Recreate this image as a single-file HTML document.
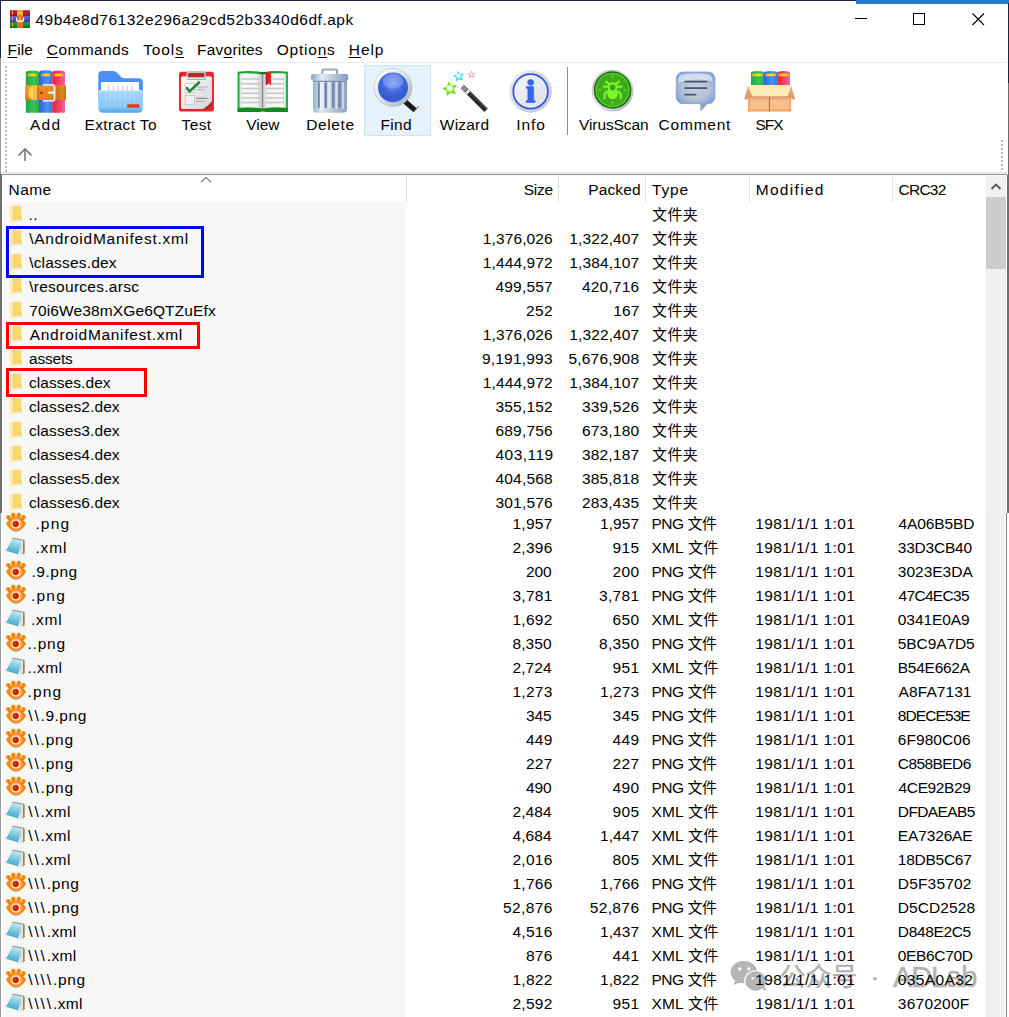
<!DOCTYPE html>
<html lang="zh">
<head>
<meta charset="utf-8">
<title>49b4e8d76132e296a29cd52b3340d6df.apk</title>
<style>
html,body{margin:0;padding:0;background:#fff;}
body{width:1009px;height:1017px;position:relative;overflow:hidden;font-family:"Liberation Sans","Noto Sans CJK SC",sans-serif;font-size:15px;color:#000;}
.a{position:absolute;}
.t{position:absolute;white-space:pre;line-height:20px;height:20px;font-size:15.5px;}
.ic{position:absolute;overflow:visible;}
.c{font-size:15px;position:relative;top:0.5px}
u{text-decoration:underline;text-decoration-thickness:1.4px;text-underline-offset:1.6px;}
</style>
</head>
<body>
<!-- name column sorted background -->
<div class=a style="left:3px;top:202px;width:403px;height:815px;background:#f7f7f7"></div>
<!-- window borders -->
<div class=a style="left:0;top:0;width:1009px;height:1px;background:#1b2440"></div>
<div class=a style="left:856px;top:0;width:153px;height:3.5px;background:#1e7ccf"></div>
<div class=a style="left:0;top:174px;width:2px;height:339px;background:#6e6e6e"></div>
<div class=a style="left:0;top:0;width:1px;height:58px;background:#1b2440"></div>
<div class=a style="left:0;top:58px;width:1px;height:116px;background:#999"></div>
<div class=a style="left:0;top:513px;width:1px;height:504px;background:#9c9ea6"></div>
<div class=a style="left:1007.5px;top:3px;width:1.5px;height:80px;background:#1b2440"></div>
<div class=a style="left:1007.5px;top:83px;width:1.5px;height:92px;background:#6a6a6a"></div>
<div class=a style="left:1007px;top:175px;width:2px;height:338px;background:#707070"></div>
<div class=a style="left:1006px;top:513px;width:1px;height:504px;background:#85858d"></div>
<!-- title bar controls -->
<div class=a style="left:855px;top:18px;width:12px;height:1px;background:#000"></div>
<div class=a style="left:913px;top:13px;width:10px;height:10px;border:1px solid #000;box-sizing:content-box"></div>
<svg class=ic style="left:971px;top:12px" width=14 height=14><path d="M1.5 1.5L13 13M13 1.5L1.5 13" stroke="#000" stroke-width="1.1" fill="none"/></svg>
<!-- menu bar -->
<div class=a style="left:1px;top:61.7px;width:1006px;height:1.3px;background:#ebebeb"></div>
<!-- toolbar -->
<div class=a style="left:5px;top:66px;width:2px;height:106px;background:repeating-linear-gradient(#bababa 0 2px,#fff 2px 4px)"></div>
<div class=a style="left:1001px;top:140px;width:2px;height:32px;background:repeating-linear-gradient(#bababa 0 2px,#fff 2px 4px)"></div>
<div class=a style="left:364px;top:65px;width:65px;height:69px;background:#e5f1fb;border:1px solid #cce4f7;box-sizing:content-box"></div>
<div class=a style="left:567px;top:67px;width:1px;height:68px;background:#8c8c8c"></div>
<svg class=ic style="left:0;top:0" width="1009" height="140" viewBox="0 0 1009 140">
<defs>
<linearGradient id="gGreen" x1="0" x2="1"><stop offset="0" stop-color="#1fa840"/><stop offset=".6" stop-color="#33c455"/><stop offset="1" stop-color="#25b048"/></linearGradient>
<linearGradient id="gBlue" x1="0" x2="1"><stop offset="0" stop-color="#2b5fe0"/><stop offset=".6" stop-color="#4a92f0"/><stop offset="1" stop-color="#3578e6"/></linearGradient>
<linearGradient id="gRed" x1="0" x2="1"><stop offset="0" stop-color="#e8203c"/><stop offset=".6" stop-color="#f5456e"/><stop offset="1" stop-color="#f560a8"/></linearGradient>
<linearGradient id="gBelt" x1="0" x2="0" y1="0" y2="1"><stop offset="0" stop-color="#f5a428"/><stop offset=".5" stop-color="#ee8a1c"/><stop offset="1" stop-color="#e07814"/></linearGradient>
<linearGradient id="gYel" x1="0" x2="1"><stop offset="0" stop-color="#f6a812"/><stop offset=".6" stop-color="#ffe020"/><stop offset="1" stop-color="#f6b012"/></linearGradient>
<linearGradient id="gFoldF" x1="0" x2="0" y1="0" y2="1"><stop offset="0" stop-color="#a9d8fb"/><stop offset=".75" stop-color="#86c6f8"/><stop offset="1" stop-color="#4f9ff0"/></linearGradient>
<linearGradient id="gPaper" x1="0" x2="1" y1="0" y2="1"><stop offset="0" stop-color="#fbfbfb"/><stop offset="1" stop-color="#d4d4d4"/></linearGradient>
<linearGradient id="gLid" x1="0" x2="1"><stop offset="0" stop-color="#8fa3c0"/><stop offset=".3" stop-color="#e4ecf5"/><stop offset=".6" stop-color="#b8c8dc"/><stop offset="1" stop-color="#8397b6"/></linearGradient>
<linearGradient id="gCan" x1="0" x2="1"><stop offset="0" stop-color="#9db1cd"/><stop offset=".25" stop-color="#dfe8f3"/><stop offset=".6" stop-color="#b4c4da"/><stop offset="1" stop-color="#8ea3c2"/></linearGradient>
<radialGradient id="gLens" cx=".5" cy=".35" r=".7"><stop offset="0" stop-color="#8aa6f6"/><stop offset=".45" stop-color="#4668dc"/><stop offset=".8" stop-color="#3358d4"/><stop offset="1" stop-color="#3f86ee"/></radialGradient>
<linearGradient id="gRim" x1="0" x2="1" y1="0" y2="1"><stop offset="0" stop-color="#ffffff"/><stop offset=".5" stop-color="#dde2e6"/><stop offset="1" stop-color="#a8b0b8"/></linearGradient>
<linearGradient id="gInfo" x1="0" x2="1" y1="0" y2="1"><stop offset="0" stop-color="#eef0f3"/><stop offset=".5" stop-color="#d6dadf"/><stop offset="1" stop-color="#c2c8cf"/></linearGradient>
<linearGradient id="gInfoIn" x1="0" x2="1" y1="0" y2="1"><stop offset="0" stop-color="#f6f7f9"/><stop offset="1" stop-color="#d9dde3"/></linearGradient>
<linearGradient id="gI" x1="0" x2="0" y1="0" y2="1"><stop offset="0" stop-color="#4a78ee"/><stop offset="1" stop-color="#2f48e4"/></linearGradient>
<linearGradient id="gVRim" x1="0" x2="1" y1="0" y2="1"><stop offset="0" stop-color="#b4b6ba"/><stop offset=".5" stop-color="#e6e7e9"/><stop offset="1" stop-color="#a4a6aa"/></linearGradient>
<radialGradient id="gVir" cx=".5" cy=".5" r=".5"><stop offset="0" stop-color="#46b41f"/><stop offset=".85" stop-color="#3ea81c"/><stop offset="1" stop-color="#57d422"/></radialGradient>
<linearGradient id="gCom" x1="0" x2="0" y1="0" y2="1"><stop offset="0" stop-color="#c6d6ee"/><stop offset=".45" stop-color="#b4c0d6"/><stop offset="1" stop-color="#a9b6cc"/></linearGradient>
<linearGradient id="gBox" x1="0" x2="0" y1="0" y2="1"><stop offset="0" stop-color="#df935c"/><stop offset=".3" stop-color="#f8c090"/><stop offset=".8" stop-color="#f9bd8a"/><stop offset="1" stop-color="#f39a52"/></linearGradient>
<linearGradient id="gFlap" x1="0" x2="0" y1="0" y2="1"><stop offset="0" stop-color="#f0b888"/><stop offset="1" stop-color="#cf8e5e"/></linearGradient>
<linearGradient id="gWand" x1="0" x2="1" y1="1" y2="0"><stop offset="0" stop-color="#1c1c1c"/><stop offset=".5" stop-color="#5a5a5a"/><stop offset="1" stop-color="#2a2a2a"/></linearGradient>
</defs>
<!-- window icon -->
<g>
<linearGradient id="wiR" x1="0" x2="0" y1="0" y2="1"><stop offset="0" stop-color="#e546a0"/><stop offset=".25" stop-color="#c4183f"/><stop offset="1" stop-color="#96102e"/></linearGradient>
<linearGradient id="wiB" x1="0" x2="0" y1="0" y2="1"><stop offset="0" stop-color="#6462dc"/><stop offset="1" stop-color="#3c3aae"/></linearGradient>
<linearGradient id="wiG" x1="0" x2="0" y1="0" y2="1"><stop offset="0" stop-color="#22a23e"/><stop offset=".8" stop-color="#157a2a"/><stop offset="1" stop-color="#0b5218"/></linearGradient>
<rect x="10" y="10" width="20" height="6" fill="url(#wiR)"/>
<rect x="10" y="16" width="20" height="6" fill="url(#wiB)"/>
<rect x="10" y="22" width="20" height="6" fill="url(#wiG)"/>
<rect x="11.900" y="11" width="1.200" height="3.600" fill="#f0a818"/><rect x="11.900" y="17" width="1.200" height="3.600" fill="#f0a818"/><rect x="11.900" y="23" width="1.200" height="3.600" fill="#f0a818"/>
<rect x="17" y="10" width="6" height="7" fill="#f0a612"/><rect x="17" y="16" width="6" height="12" fill="#de6c10"/>
<ellipse cx="20" cy="14" rx="2.400" ry="2.600" fill="#f7c020"/><rect x="18.400" y="14.800" width="3.200" height="1" fill="#d8560c"/>
<path d="M16.600 17.500V19.500Q16.600 21.500 19 21.500H21Q23.600 21.500 23.600 19.500V17.500" fill="none" stroke="#fff" stroke-width="1.300"/>
<rect x="19.400" y="18.300" width="1.300" height="3" fill="#c9d3dc"/>
</g>
<!-- Add -->
<g>
<path d="M25.8 72.5Q25.8 70.6 32.4 70.6Q39 70.6 39 72.5V112.8H25.8z" fill="url(#gGreen)"/>
<path d="M39 72.2Q39 70.2 45.6 70.2Q52.3 70.2 52.3 72.2V112.8H39z" fill="url(#gBlue)"/>
<path d="M52.3 72.5Q52.3 70.6 58.7 70.6Q65 70.6 65 72.5V112.8H52.3z" fill="url(#gRed)"/>
<rect x="28" y="73.6" width="9" height="2.7" fill="url(#gYel)"/><rect x="41.2" y="73.6" width="9" height="2.7" fill="url(#gYel)"/><rect x="54.3" y="73.6" width="9" height="2.7" fill="url(#gYel)"/>
<rect x="25.2" y="85.5" width="40.8" height="14.5" rx="1" fill="url(#gBelt)"/>
<rect x="56" y="85.500" width="10" height="14.500" rx="1" fill="#c96f14" opacity=".75"/>
<rect x="60" y="85.500" width="3.500" height="14.500" fill="#e28a22" opacity=".8"/>
<path d="M37.400 85.300H34Q27.800 86.300 27.800 92.800Q27.800 99.200 34 100.200H37.400z" fill="#f5b52e"/>
<path d="M33.500 85.400Q29 87 29 92.800Q29 98.500 33.500 100.100z" fill="#fbd65a"/>
<rect x="34.800" y="85.400" width="1.400" height="14.700" fill="#f8c840"/>
<rect x="37.400" y="85.500" width="1.300" height="14.500" fill="#c56a0e"/>
<rect x="38.700" y="85.500" width="14" height="14.500" fill="#e4821a" opacity=".6"/>
<path d="M43 84.900H52.600Q54.600 84.900 54.600 86.900V98.800Q54.600 100.800 52.600 100.800H43" fill="none" stroke="#e6e9ec" stroke-width="1.800"/>
<path d="M43 84.900H52.600Q54.600 84.900 54.600 86.900V98.800Q54.600 100.800 52.600 100.800H43" fill="none" stroke="#9aa0a8" stroke-width=".5" transform="translate(.9 .9)" opacity=".6"/>
<rect x="48" y="91.400" width="6.500" height="2.300" rx="1" fill="#f4f4f4"/>
<circle cx="41.500" cy="92.700" r="1.200" fill="#6b3a0c"/>
</g>
<!-- Extract To -->
<g>
<path d="M98.3 75Q98.3 70.9 102.5 70.9H113Q116 70.9 118 73.5L120.5 76.6Q122 78.3 124.5 78.3H138.5Q142.9 78.3 142.9 82.8V100H98.3z" fill="#4b8ff5"/>
<rect x="101" y="82" width="38" height="9" fill="#fff"/>
<g stroke="#b8bcc2" stroke-width="1"><path d="M108.7 86V90M113.3 86V90M118 86V90M122.8 86V90M127.3 86V90M132 86V90"/></g>
<path d="M98.3 92.5Q98.3 90 101 90H140.2Q142.9 90 142.9 92.5V107.5Q142.9 112.8 137.5 112.8H103.7Q98.3 112.8 98.3 107.5z" fill="url(#gFoldF)"/>
<g stroke="#fff" stroke-width="1" opacity=".22"><path d="M106 91V108M110.600 91V108M115.300 91V108M120 91V108M124.600 91V108M129.300 91V103M134 91V103"/></g>
<path d="M98.800 92.500Q98.800 90.500 101 90.500H140.200Q142.400 90.500 142.400 92.500" fill="none" stroke="#d4ecfd" stroke-width="1"/>
<rect x="127.200" y="104.200" width="12.100" height="3.600" rx=".6" fill="#e8391b"/>
</g>
<!-- Test -->
<g>
<rect x="179" y="71.8" width="34.9" height="39.8" rx="2.6" fill="#e6222b"/>
<path d="M180.9 78.3Q180.9 76.3 182.9 76.3H210Q212 76.3 212 78.3V101Q211 107.5 203 109H182.9Q180.9 109 180.9 107z" fill="url(#gPaper)"/>
<path d="M212 101Q209.5 105 203 109Q210 108.8 212 104.5z" fill="#b9221f"/>
<rect x="187.2" y="72.2" width="18" height="7" rx="2" fill="#b32b2b" stroke="#b9bdc3" stroke-width="1.700"/>
<rect x="186.500" y="77.300" width="19.400" height="2.300" rx=".8" fill="#dcdfe2"/>
<rect x="186.500" y="79.300" width="19.400" height=".7" fill="#8e949c" opacity=".7"/>
<rect x="185.2" y="83.6" width="9.2" height="8.8" fill="#fafafa" stroke="#c9bfbf" stroke-width=".8"/>
<rect x="185.2" y="95.5" width="9.2" height="8.8" fill="#f1f1f1" stroke="#c9bfbf" stroke-width=".8"/>
<path d="M186.2 87.2L189.6 91.4L199.8 81.8" fill="none" stroke="#1e8a2f" stroke-width="2.6" stroke-linejoin="miter"/>
<path d="M196.5 87H208" stroke="#c2b4b4" stroke-width="1.2"/><path d="M196.5 89.7H205" stroke="#b4b4b4" stroke-width="1"/>
<path d="M196 98.3H207.5" stroke="#8c8c8c" stroke-width="1.2"/><path d="M196 101.2H204.5" stroke="#a4a4a4" stroke-width="1"/>
</g>
<!-- View -->
<g>
<linearGradient id="gPgL" x1="0" x2="1"><stop offset="0" stop-color="#d6d6d6"/><stop offset=".15" stop-color="#f8f8f8"/><stop offset=".75" stop-color="#f3f3f3"/><stop offset="1" stop-color="#bdbdbd"/></linearGradient>
<linearGradient id="gPgR" x1="0" x2="1"><stop offset="0" stop-color="#c6c6c6"/><stop offset=".2" stop-color="#f3f3f3"/><stop offset=".85" stop-color="#f8f8f8"/><stop offset="1" stop-color="#d6d6d6"/></linearGradient>
<path d="M237.600 71.800Q250 70.200 262.700 72.200Q275 70.200 287.900 71.800V112H266Q262.700 110.600 259.500 112H237.600z" fill="#1da22d"/>
<path d="M237.600 108.300H287.900V112H266Q262.700 110.600 259.500 112H237.600z" fill="#0f8a20"/>
<path d="M260.500 71.900Q262.700 72.600 265 71.900V74.500H260.500z" fill="#0c6a18"/>
<path d="M239.400 73.600Q251 72.600 262.600 74.600V108.600Q251 106.600 239.400 107.800z" fill="url(#gPgL)"/>
<path d="M262.600 74.600Q274 72.600 286.100 73.600V107.800Q274 106.600 262.600 108.600z" fill="url(#gPgR)"/>
<path d="M262.600 74V109.500" stroke="#7a7a7a" stroke-width=".8"/>
<g stroke="#bcbcbc" stroke-width="1.500" opacity=".8"><path d="M241.500 79H259.500M241.500 83.700H259.500M241.500 88.400H259.500M241.500 93.200H259.500M241.500 97.900H259.500M241.500 102.600H259.500M272.500 79H284M266 83.700H284M266 88.400H284M266 93.200H284M266 97.900H284M266 102.600H284"/></g>
<path d="M265.800 72.400H271.100V85.500L268.450 83.200L265.800 85.500z" fill="#e0232b"/>
<path d="M265.800 72.400H267.300V84.200L265.800 85.500z" fill="#c4161e"/>
</g>
<!-- Delete -->
<g>
<path d="M322.4 74V70.5Q322.4 69.5 323.4 69.5H336Q337 69.5 337 70.5V74" fill="none" stroke="#8fa5c2" stroke-width="2"/>
<rect x="311" y="73.9" width="37.2" height="6.8" rx="2" fill="url(#gLid)"/>
<path d="M313 80.7H347V109Q347 112.8 343 112.8H317Q313 112.8 313 109z" fill="url(#gCan)"/>
<rect x="313" y="80.7" width="34" height="1.3" fill="#7a8eaf"/>
<g fill="#7489ab"><rect x="317.8" y="82" width="2" height="26" rx="1"/><rect x="324.4" y="82" width="2.6" height="26" rx="1"/><rect x="332" y="82" width="2.6" height="26" rx="1"/><rect x="338.2" y="82" width="2.8" height="26" rx="1"/></g>
<g fill="#eaf0f8"><rect x="320" y="82" width="3.4" height="27"/><rect x="328" y="82" width="2.6" height="27" opacity=".7"/><rect x="335.4" y="82" width="2.2" height="27" opacity=".7"/><rect x="342" y="82" width="2" height="27" opacity=".6"/></g>
</g>
<!-- Find -->
<g>
<path d="M405.2 101.3L415.4 110.2" stroke="#1c1c1c" stroke-width="5.6"/>
<path d="M408.4 99.400L417.700 107.500" stroke="#f2f2f2" stroke-width="2.500"/>
<path d="M413.700 111.800L418.600 106.200" stroke="#555" stroke-width="1"/>
<circle cx="393" cy="87.400" r="17" fill="none" stroke="url(#gRim)" stroke-width="4.200"/>
<circle cx="393" cy="87.400" r="19" fill="none" stroke="#a9b1b9" stroke-width=".6" opacity=".8"/>
<circle cx="393" cy="87.400" r="15" fill="url(#gLens)"/>
<ellipse cx="393" cy="81" rx="10.500" ry="7.500" fill="#9ab2fa" opacity=".45"/>
</g>
<!-- Wizard -->
<g>
<radialGradient id="gStG" cx=".5" cy=".5" r=".5"><stop offset="0" stop-color="#ffffff"/><stop offset=".3" stop-color="#e4ffd0"/><stop offset=".62" stop-color="#66e010"/><stop offset="1" stop-color="#66e010"/></radialGradient>
<radialGradient id="gStC" cx=".5" cy=".5" r=".5"><stop offset="0" stop-color="#ffffff"/><stop offset=".3" stop-color="#d8fbff"/><stop offset=".62" stop-color="#22e0f8"/><stop offset="1" stop-color="#22e0f8"/></radialGradient>
<radialGradient id="gStP" cx=".5" cy=".5" r=".5"><stop offset="0" stop-color="#ffffff"/><stop offset=".3" stop-color="#ffe4e4"/><stop offset=".7" stop-color="#f8909c"/><stop offset="1" stop-color="#f8909c"/></radialGradient>
<path d="M462.300 86.600L486 110.400" stroke="#2c2c2c" stroke-width="4.700" stroke-linecap="butt"/>
<path d="M464.500 86.200L487.300 109" stroke="#5a5a5a" stroke-width="1.200"/>
<path d="M462.300 86.600L466 90.300" stroke="#8e8e8e" stroke-width="4.700"/>
<path d="M466.600 90.900L468.600 92.900" stroke="#ececec" stroke-width="4.700"/>
<path d="M450 81.300L452.300 86L457.400 86.600L453.700 90.200L454.600 95.300L450 92.900L445.400 95.300L446.300 90.200L442.600 86.600L447.700 86z" transform="rotate(-12 450 89)" fill="url(#gStG)"/>
<path d="M458.700 70.600L460.400 74.100L464.200 74.600L461.400 77.300L462.100 81.100L458.700 79.300L455.300 81.100L456 77.300L453.200 74.600L457 74.100z" transform="rotate(-10 458.700 76.300)" fill="url(#gStC)"/>
<path d="M471.500 70.600L472.700 73L475.400 73.400L473.400 75.300L473.900 77.900L471.500 76.700L469.100 77.900L469.600 75.300L467.600 73.400L470.300 73z" fill="url(#gStP)"/>
</g>
<!-- Info -->
<g>
<circle cx="530.6" cy="91.4" r="21.300" fill="url(#gInfo)"/>
<circle cx="530.6" cy="91.400" r="17.300" fill="url(#gInfoIn)" stroke="#3556e2" stroke-width="1.800"/>
<text x="530.500" y="101.800" text-anchor="middle" font-family="'Liberation Serif',serif" font-weight="bold" font-size="32" fill="#3d62ea" stroke="#3d62ea" stroke-width="1.700" stroke-linejoin="round">i</text>
</g>
<!-- separator drawn in html -->
<!-- VirusScan -->
<g>
<circle cx="612.6" cy="90.5" r="21" fill="url(#gVRim)"/>
<circle cx="612.6" cy="90" r="18.8" fill="#1c6a12"/>
<circle cx="612.6" cy="90" r="17.3" fill="url(#gVir)"/>
<g stroke="#5fd42a" stroke-width="1.5"><path d="M612.6 74.800V78M612.600 101.500V104.800M597.800 90H601M624.200 90H627.400"/></g>
<g fill="none" stroke="#7cf82a" stroke-width="2.100" stroke-linecap="round"><path d="M606.300 81.500L609.500 84.500M618.900 81.500L615.700 84.500M603.800 86.600H608.500M616.700 86.600H621.400M608.500 91.500Q604.500 92 604.500 95V98.500M616.700 91.500Q620.700 92 620.700 95V98.500"/></g>
<circle cx="612.6" cy="87.200" r="4.900" fill="#7cf82a"/>
<ellipse cx="612.6" cy="93.600" rx="5.300" ry="5.600" fill="#7cf82a"/>
<circle cx="612.6" cy="87.400" r="2.800" fill="#3da01c"/>
</g>
<!-- Comment -->
<g>
<path d="M700 102.500H708.700L700.700 111.600z" fill="#8fa2c0"/>
<radialGradient id="gCom2" cx=".5" cy=".5" r=".62"><stop offset="0" stop-color="#c6cfde"/><stop offset=".6" stop-color="#b5c0d6"/><stop offset="1" stop-color="#7f9fd6"/></radialGradient><rect x="676.300" y="72.100" width="38.600" height="31.500" rx="6.500" fill="url(#gCom2)" stroke="#86a4d6" stroke-width="1"/>
<path d="M682 74.500Q695 72.500 709 74.500Q712.500 76 712.500 81Q695 77 678.500 83V79Q678.500 75.500 682 74.500z" fill="#dfeafa" opacity=".7"/>
<g stroke="#47566f" stroke-width="1.700" stroke-linecap="round"><path d="M685 81.600H706.600M685 88.100H706.600M685 94.700H695.600"/></g>
</g>
<!-- SFX -->
<g>
<path d="M751 72.800Q751 71 757.500 71Q764 71 764 72.800V86H751z" fill="url(#gGreen)"/>
<path d="M764 72.800Q764 71 770.600 71Q777.200 71 777.200 72.800V86H764z" fill="url(#gBlue)"/>
<path d="M777.200 72.800Q777.200 71 783.600 71Q790 71 790 72.800V86H777.200z" fill="url(#gRed)"/>
<rect x="752.200" y="73.600" width="10.600" height="2.600" fill="url(#gYel)"/><rect x="765.300" y="73.600" width="10.600" height="2.600" fill="url(#gYel)"/><rect x="778.400" y="73.600" width="10.400" height="2.600" fill="url(#gYel)"/>
<path d="M748 85H791.100L787.600 96.200H752.200z" fill="#fdecb8"/>
<path d="M748 85.500L752.200 96.200V97.500L744.300 99.800z" fill="url(#gFlap)"/>
<path d="M791.100 85.500L787.600 96.200V97.500L795.200 99.800z" fill="url(#gFlap)"/>
<path d="M748 97.500L752.200 96.200H787.600L791.100 97.500V111.600H748z" fill="url(#gBox)"/>
<rect x="748" y="96.800" width="1.600" height="14.800" fill="#f0a060" opacity=".8"/><rect x="789.500" y="96.800" width="1.600" height="14.800" fill="#f0a060" opacity=".8"/>
<path d="M769.400 97V111.600" stroke="#a0602e" stroke-width=".8"/>
</g>
</svg>

<svg class=ic style="left:16.800px;top:147px" width=16 height=15><path d="M8 14V2M1.500 8.500L8 2L14.500 8.500" stroke="#777" stroke-width="1.600" fill="none"/></svg>
<div class=a style="left:1px;top:172px;width:1006px;height:1px;background:#e2e2e2"></div>
<div class=a style="left:1px;top:173px;width:1006px;height:1px;background:#f2f2f2"></div>
<div class=a style="left:1px;top:174px;width:1006px;height:1px;background:#8c8c8c"></div>
<!-- header separators -->
<div class=a style="left:406px;top:176px;width:1px;height:26px;background:#e0e0e0"></div>
<div class=a style="left:558px;top:176px;width:1px;height:26px;background:#e0e0e0"></div>
<div class=a style="left:645px;top:176px;width:1px;height:26px;background:#e0e0e0"></div>
<div class=a style="left:749px;top:176px;width:1px;height:26px;background:#e0e0e0"></div>
<div class=a style="left:892px;top:176px;width:1px;height:26px;background:#e0e0e0"></div>
<svg class=ic style="left:199.500px;top:176px" width=12 height=8><path d="M1 6.200L6 1.400L11 6.200" stroke="#666" stroke-width="1.100" fill="none"/></svg>
<!-- scrollbar -->
<div class=a style="left:986px;top:176px;width:20px;height:337px;background:#f0f0f0"></div>
<div class=a style="left:985px;top:513px;width:20px;height:504px;background:#f0f0f0"></div>
<div class=a style="left:986px;top:197px;width:20px;height:72px;background:#cdcdcd"></div>
<svg class=ic style="left:990px;top:182px" width=12 height=9><path d="M1.5 7L6 2.5L10.5 7" stroke="#555" stroke-width="1.8" fill="none"/></svg>
<!-- row icons -->
<svg class=ic style="left:9px;top:205.4px" width=14 height=19><path d="M1 1.8L5 0.8V15.2L2.6 18L1 17z" fill="#fbe7a6"/><path d="M4.6 0.8H12.1V10.2H12.9V15.6H4.6z" fill="#f6d673"/><path d="M4.6 0.8H5.3V15.6H4.6z" fill="#ecc65a"/><path d="M5.3 0.8H12.1V2H5.3z" fill="#f9de86"/></svg>
<svg class=ic style="left:9px;top:229.4px" width=14 height=19><path d="M1 1.8L5 0.8V15.2L2.6 18L1 17z" fill="#fbe7a6"/><path d="M4.6 0.8H12.1V10.2H12.9V15.6H4.6z" fill="#f6d673"/><path d="M4.6 0.8H5.3V15.6H4.6z" fill="#ecc65a"/><path d="M5.3 0.8H12.1V2H5.3z" fill="#f9de86"/></svg>
<svg class=ic style="left:9px;top:253.4px" width=14 height=19><path d="M1 1.8L5 0.8V15.2L2.6 18L1 17z" fill="#fbe7a6"/><path d="M4.6 0.8H12.1V10.2H12.9V15.6H4.6z" fill="#f6d673"/><path d="M4.6 0.8H5.3V15.6H4.6z" fill="#ecc65a"/><path d="M5.3 0.8H12.1V2H5.3z" fill="#f9de86"/></svg>
<svg class=ic style="left:9px;top:277.4px" width=14 height=19><path d="M1 1.8L5 0.8V15.2L2.6 18L1 17z" fill="#fbe7a6"/><path d="M4.6 0.8H12.1V10.2H12.9V15.6H4.6z" fill="#f6d673"/><path d="M4.6 0.8H5.3V15.6H4.6z" fill="#ecc65a"/><path d="M5.3 0.8H12.1V2H5.3z" fill="#f9de86"/></svg>
<svg class=ic style="left:9px;top:301.4px" width=14 height=19><path d="M1 1.8L5 0.8V15.2L2.6 18L1 17z" fill="#fbe7a6"/><path d="M4.6 0.8H12.1V10.2H12.9V15.6H4.6z" fill="#f6d673"/><path d="M4.6 0.8H5.3V15.6H4.6z" fill="#ecc65a"/><path d="M5.3 0.8H12.1V2H5.3z" fill="#f9de86"/></svg>
<svg class=ic style="left:9px;top:325.4px" width=14 height=19><path d="M1 1.8L5 0.8V15.2L2.6 18L1 17z" fill="#fbe7a6"/><path d="M4.6 0.8H12.1V10.2H12.9V15.6H4.6z" fill="#f6d673"/><path d="M4.6 0.8H5.3V15.6H4.6z" fill="#ecc65a"/><path d="M5.3 0.8H12.1V2H5.3z" fill="#f9de86"/></svg>
<svg class=ic style="left:9px;top:349.4px" width=14 height=19><path d="M1 1.8L5 0.8V15.2L2.6 18L1 17z" fill="#fbe7a6"/><path d="M4.6 0.8H12.1V10.2H12.9V15.6H4.6z" fill="#f6d673"/><path d="M4.6 0.8H5.3V15.6H4.6z" fill="#ecc65a"/><path d="M5.3 0.8H12.1V2H5.3z" fill="#f9de86"/></svg>
<svg class=ic style="left:9px;top:373.4px" width=14 height=19><path d="M1 1.8L5 0.8V15.2L2.6 18L1 17z" fill="#fbe7a6"/><path d="M4.6 0.8H12.1V10.2H12.9V15.6H4.6z" fill="#f6d673"/><path d="M4.6 0.8H5.3V15.6H4.6z" fill="#ecc65a"/><path d="M5.3 0.8H12.1V2H5.3z" fill="#f9de86"/></svg>
<svg class=ic style="left:9px;top:397.4px" width=14 height=19><path d="M1 1.8L5 0.8V15.2L2.6 18L1 17z" fill="#fbe7a6"/><path d="M4.6 0.8H12.1V10.2H12.9V15.6H4.6z" fill="#f6d673"/><path d="M4.6 0.8H5.3V15.6H4.6z" fill="#ecc65a"/><path d="M5.3 0.8H12.1V2H5.3z" fill="#f9de86"/></svg>
<svg class=ic style="left:9px;top:421.4px" width=14 height=19><path d="M1 1.8L5 0.8V15.2L2.6 18L1 17z" fill="#fbe7a6"/><path d="M4.6 0.8H12.1V10.2H12.9V15.6H4.6z" fill="#f6d673"/><path d="M4.6 0.8H5.3V15.6H4.6z" fill="#ecc65a"/><path d="M5.3 0.8H12.1V2H5.3z" fill="#f9de86"/></svg>
<svg class=ic style="left:9px;top:445.4px" width=14 height=19><path d="M1 1.8L5 0.8V15.2L2.6 18L1 17z" fill="#fbe7a6"/><path d="M4.6 0.8H12.1V10.2H12.9V15.6H4.6z" fill="#f6d673"/><path d="M4.6 0.8H5.3V15.6H4.6z" fill="#ecc65a"/><path d="M5.3 0.8H12.1V2H5.3z" fill="#f9de86"/></svg>
<svg class=ic style="left:9px;top:469.4px" width=14 height=19><path d="M1 1.8L5 0.8V15.2L2.6 18L1 17z" fill="#fbe7a6"/><path d="M4.6 0.8H12.1V10.2H12.9V15.6H4.6z" fill="#f6d673"/><path d="M4.6 0.8H5.3V15.6H4.6z" fill="#ecc65a"/><path d="M5.3 0.8H12.1V2H5.3z" fill="#f9de86"/></svg>
<svg class=ic style="left:9px;top:493.4px" width=14 height=19><path d="M1 1.8L5 0.8V15.2L2.6 18L1 17z" fill="#fbe7a6"/><path d="M4.6 0.8H12.1V10.2H12.9V15.6H4.6z" fill="#f6d673"/><path d="M4.6 0.8H5.3V15.6H4.6z" fill="#ecc65a"/><path d="M5.3 0.8H12.1V2H5.3z" fill="#f9de86"/></svg>
<svg class=ic style="left:5px;top:512px" width=22 height=22><g><ellipse cx="11" cy="20" rx="6" ry=".7" fill="#ebebeb"/><g fill="#f6860e" stroke="#f6860e"><circle cx="3.4" cy="5.2" r="2" stroke="none"/><circle cx="8.3" cy="2.9" r="2.1" stroke="none"/><circle cx="13.8" cy="2.9" r="2.1" stroke="none"/><circle cx="18.6" cy="5.2" r="2" stroke="none"/><path d="M3.4 5.2L7 9.5M8.3 2.9L9.400 7.500M13.800 2.900L12.700 7.500M18.600 5.200L15 9.500" stroke-width="4" stroke-linecap="round"/><path d="M1 11.500C3 8.500 6.500 5.500 11 5.500C15.500 5.500 19 8.500 21 11.500C18.500 15.500 15.500 19.300 11 19.300C6.500 19.300 3.500 15.500 1 11.500z" stroke="none"/></g><path d="M2.500 12.500C5 16.500 8 18.600 11 18.600C14 18.600 17 16.500 19.500 12.500C17 17 14 19.300 11 19.300C8 19.300 5 17 2.500 12.500z" fill="#e66c08"/><circle cx="11" cy="12" r="5.500" fill="none" stroke="#fbd9b0" stroke-width=".6"/><circle cx="11" cy="12" r="4.600" fill="#fff"/><circle cx="10.800" cy="11.900" r="3.500" fill="#ee8a26"/><circle cx="10.700" cy="11.900" r="2.800" fill="#cc1a0c"/><circle cx="10.100" cy="11.200" r="1.100" fill="#e5452e"/></g></svg>
<svg class=ic style="left:5px;top:536px" width=22 height=22><g><path d="M18 4L19.700 4.500V17L17.800 19.200z" fill="#a58044"/><path d="M18 4.300L17.900 16.600L14.500 19.600L13 18.200z" fill="#e6eaee"/><path d="M17.100 8L16.900 17.300M16 11L15.800 18.300" stroke="#cfd5da" stroke-width=".6"/><path d="M17.900 16.600L14.500 19.600" stroke="#c4c8cc" stroke-width=".6"/><defs><linearGradient id="npg1" x1=".6" y1="0" x2=".3" y2="1"><stop offset="0" stop-color="#cdeef6"/><stop offset=".5" stop-color="#7fc8dc"/><stop offset="1" stop-color="#3aa0be"/></linearGradient></defs><path d="M7.500 2.300L18 4.300L13 18.200L1 14.700z" fill="url(#npg1)"/><path d="M7.500 2.300L18.600 4.100" stroke="#6f8080" stroke-width=".9"/></g></svg>
<svg class=ic style="left:5px;top:560px" width=22 height=22><g><ellipse cx="11" cy="20" rx="6" ry=".7" fill="#ebebeb"/><g fill="#f6860e" stroke="#f6860e"><circle cx="3.4" cy="5.2" r="2" stroke="none"/><circle cx="8.3" cy="2.9" r="2.1" stroke="none"/><circle cx="13.8" cy="2.9" r="2.1" stroke="none"/><circle cx="18.6" cy="5.2" r="2" stroke="none"/><path d="M3.4 5.2L7 9.5M8.3 2.9L9.400 7.500M13.800 2.900L12.700 7.500M18.600 5.200L15 9.500" stroke-width="4" stroke-linecap="round"/><path d="M1 11.500C3 8.500 6.500 5.500 11 5.500C15.500 5.500 19 8.500 21 11.500C18.500 15.500 15.500 19.300 11 19.300C6.500 19.300 3.500 15.500 1 11.500z" stroke="none"/></g><path d="M2.500 12.500C5 16.500 8 18.600 11 18.600C14 18.600 17 16.500 19.500 12.500C17 17 14 19.300 11 19.300C8 19.300 5 17 2.500 12.500z" fill="#e66c08"/><circle cx="11" cy="12" r="5.500" fill="none" stroke="#fbd9b0" stroke-width=".6"/><circle cx="11" cy="12" r="4.600" fill="#fff"/><circle cx="10.800" cy="11.900" r="3.500" fill="#ee8a26"/><circle cx="10.700" cy="11.900" r="2.800" fill="#cc1a0c"/><circle cx="10.100" cy="11.200" r="1.100" fill="#e5452e"/></g></svg>
<svg class=ic style="left:5px;top:584px" width=22 height=22><g><ellipse cx="11" cy="20" rx="6" ry=".7" fill="#ebebeb"/><g fill="#f6860e" stroke="#f6860e"><circle cx="3.4" cy="5.2" r="2" stroke="none"/><circle cx="8.3" cy="2.9" r="2.1" stroke="none"/><circle cx="13.8" cy="2.9" r="2.1" stroke="none"/><circle cx="18.6" cy="5.2" r="2" stroke="none"/><path d="M3.4 5.2L7 9.5M8.3 2.9L9.400 7.500M13.800 2.900L12.700 7.500M18.600 5.200L15 9.500" stroke-width="4" stroke-linecap="round"/><path d="M1 11.500C3 8.500 6.500 5.500 11 5.500C15.500 5.500 19 8.500 21 11.500C18.500 15.500 15.500 19.300 11 19.300C6.500 19.300 3.500 15.500 1 11.500z" stroke="none"/></g><path d="M2.500 12.500C5 16.500 8 18.600 11 18.600C14 18.600 17 16.500 19.500 12.500C17 17 14 19.300 11 19.300C8 19.300 5 17 2.500 12.500z" fill="#e66c08"/><circle cx="11" cy="12" r="5.500" fill="none" stroke="#fbd9b0" stroke-width=".6"/><circle cx="11" cy="12" r="4.600" fill="#fff"/><circle cx="10.800" cy="11.900" r="3.500" fill="#ee8a26"/><circle cx="10.700" cy="11.900" r="2.800" fill="#cc1a0c"/><circle cx="10.100" cy="11.200" r="1.100" fill="#e5452e"/></g></svg>
<svg class=ic style="left:5px;top:608px" width=22 height=22><g><path d="M18 4L19.700 4.500V17L17.800 19.200z" fill="#a58044"/><path d="M18 4.300L17.900 16.600L14.500 19.600L13 18.200z" fill="#e6eaee"/><path d="M17.100 8L16.900 17.300M16 11L15.800 18.300" stroke="#cfd5da" stroke-width=".6"/><path d="M17.900 16.600L14.500 19.600" stroke="#c4c8cc" stroke-width=".6"/><defs><linearGradient id="npg4" x1=".6" y1="0" x2=".3" y2="1"><stop offset="0" stop-color="#cdeef6"/><stop offset=".5" stop-color="#7fc8dc"/><stop offset="1" stop-color="#3aa0be"/></linearGradient></defs><path d="M7.500 2.300L18 4.300L13 18.200L1 14.700z" fill="url(#npg4)"/><path d="M7.500 2.300L18.600 4.100" stroke="#6f8080" stroke-width=".9"/></g></svg>
<svg class=ic style="left:5px;top:632px" width=22 height=22><g><ellipse cx="11" cy="20" rx="6" ry=".7" fill="#ebebeb"/><g fill="#f6860e" stroke="#f6860e"><circle cx="3.4" cy="5.2" r="2" stroke="none"/><circle cx="8.3" cy="2.9" r="2.1" stroke="none"/><circle cx="13.8" cy="2.9" r="2.1" stroke="none"/><circle cx="18.6" cy="5.2" r="2" stroke="none"/><path d="M3.4 5.2L7 9.5M8.3 2.9L9.400 7.500M13.800 2.900L12.700 7.500M18.600 5.200L15 9.500" stroke-width="4" stroke-linecap="round"/><path d="M1 11.500C3 8.500 6.500 5.500 11 5.500C15.500 5.500 19 8.500 21 11.500C18.500 15.500 15.500 19.300 11 19.300C6.500 19.300 3.500 15.500 1 11.500z" stroke="none"/></g><path d="M2.500 12.500C5 16.500 8 18.600 11 18.600C14 18.600 17 16.500 19.500 12.500C17 17 14 19.300 11 19.300C8 19.300 5 17 2.500 12.500z" fill="#e66c08"/><circle cx="11" cy="12" r="5.500" fill="none" stroke="#fbd9b0" stroke-width=".6"/><circle cx="11" cy="12" r="4.600" fill="#fff"/><circle cx="10.800" cy="11.900" r="3.500" fill="#ee8a26"/><circle cx="10.700" cy="11.900" r="2.800" fill="#cc1a0c"/><circle cx="10.100" cy="11.200" r="1.100" fill="#e5452e"/></g></svg>
<svg class=ic style="left:5px;top:656px" width=22 height=22><g><path d="M18 4L19.700 4.500V17L17.800 19.200z" fill="#a58044"/><path d="M18 4.300L17.900 16.600L14.500 19.600L13 18.200z" fill="#e6eaee"/><path d="M17.100 8L16.900 17.300M16 11L15.800 18.300" stroke="#cfd5da" stroke-width=".6"/><path d="M17.900 16.600L14.500 19.600" stroke="#c4c8cc" stroke-width=".6"/><defs><linearGradient id="npg6" x1=".6" y1="0" x2=".3" y2="1"><stop offset="0" stop-color="#cdeef6"/><stop offset=".5" stop-color="#7fc8dc"/><stop offset="1" stop-color="#3aa0be"/></linearGradient></defs><path d="M7.500 2.300L18 4.300L13 18.200L1 14.700z" fill="url(#npg6)"/><path d="M7.500 2.300L18.600 4.100" stroke="#6f8080" stroke-width=".9"/></g></svg>
<svg class=ic style="left:5px;top:680px" width=22 height=22><g><ellipse cx="11" cy="20" rx="6" ry=".7" fill="#ebebeb"/><g fill="#f6860e" stroke="#f6860e"><circle cx="3.4" cy="5.2" r="2" stroke="none"/><circle cx="8.3" cy="2.9" r="2.1" stroke="none"/><circle cx="13.8" cy="2.9" r="2.1" stroke="none"/><circle cx="18.6" cy="5.2" r="2" stroke="none"/><path d="M3.4 5.2L7 9.5M8.3 2.9L9.400 7.500M13.800 2.900L12.700 7.500M18.600 5.200L15 9.500" stroke-width="4" stroke-linecap="round"/><path d="M1 11.500C3 8.500 6.500 5.500 11 5.500C15.500 5.500 19 8.500 21 11.500C18.500 15.500 15.500 19.300 11 19.300C6.500 19.300 3.500 15.500 1 11.500z" stroke="none"/></g><path d="M2.500 12.500C5 16.500 8 18.600 11 18.600C14 18.600 17 16.500 19.500 12.500C17 17 14 19.300 11 19.300C8 19.300 5 17 2.500 12.500z" fill="#e66c08"/><circle cx="11" cy="12" r="5.500" fill="none" stroke="#fbd9b0" stroke-width=".6"/><circle cx="11" cy="12" r="4.600" fill="#fff"/><circle cx="10.800" cy="11.900" r="3.500" fill="#ee8a26"/><circle cx="10.700" cy="11.900" r="2.800" fill="#cc1a0c"/><circle cx="10.100" cy="11.200" r="1.100" fill="#e5452e"/></g></svg>
<svg class=ic style="left:5px;top:704px" width=22 height=22><g><ellipse cx="11" cy="20" rx="6" ry=".7" fill="#ebebeb"/><g fill="#f6860e" stroke="#f6860e"><circle cx="3.4" cy="5.2" r="2" stroke="none"/><circle cx="8.3" cy="2.9" r="2.1" stroke="none"/><circle cx="13.8" cy="2.9" r="2.1" stroke="none"/><circle cx="18.6" cy="5.2" r="2" stroke="none"/><path d="M3.4 5.2L7 9.5M8.3 2.9L9.400 7.500M13.800 2.900L12.700 7.500M18.600 5.200L15 9.500" stroke-width="4" stroke-linecap="round"/><path d="M1 11.500C3 8.500 6.500 5.500 11 5.500C15.500 5.500 19 8.500 21 11.500C18.500 15.500 15.500 19.300 11 19.300C6.500 19.300 3.500 15.500 1 11.500z" stroke="none"/></g><path d="M2.500 12.500C5 16.500 8 18.600 11 18.600C14 18.600 17 16.500 19.500 12.500C17 17 14 19.300 11 19.300C8 19.300 5 17 2.500 12.500z" fill="#e66c08"/><circle cx="11" cy="12" r="5.500" fill="none" stroke="#fbd9b0" stroke-width=".6"/><circle cx="11" cy="12" r="4.600" fill="#fff"/><circle cx="10.800" cy="11.900" r="3.500" fill="#ee8a26"/><circle cx="10.700" cy="11.900" r="2.800" fill="#cc1a0c"/><circle cx="10.100" cy="11.200" r="1.100" fill="#e5452e"/></g></svg>
<svg class=ic style="left:5px;top:728px" width=22 height=22><g><ellipse cx="11" cy="20" rx="6" ry=".7" fill="#ebebeb"/><g fill="#f6860e" stroke="#f6860e"><circle cx="3.4" cy="5.2" r="2" stroke="none"/><circle cx="8.3" cy="2.9" r="2.1" stroke="none"/><circle cx="13.8" cy="2.9" r="2.1" stroke="none"/><circle cx="18.6" cy="5.2" r="2" stroke="none"/><path d="M3.4 5.2L7 9.5M8.3 2.9L9.400 7.500M13.800 2.900L12.700 7.500M18.600 5.200L15 9.500" stroke-width="4" stroke-linecap="round"/><path d="M1 11.500C3 8.500 6.500 5.500 11 5.500C15.500 5.500 19 8.500 21 11.500C18.500 15.500 15.500 19.300 11 19.300C6.500 19.300 3.500 15.500 1 11.500z" stroke="none"/></g><path d="M2.500 12.500C5 16.500 8 18.600 11 18.600C14 18.600 17 16.500 19.500 12.500C17 17 14 19.300 11 19.300C8 19.300 5 17 2.500 12.500z" fill="#e66c08"/><circle cx="11" cy="12" r="5.500" fill="none" stroke="#fbd9b0" stroke-width=".6"/><circle cx="11" cy="12" r="4.600" fill="#fff"/><circle cx="10.800" cy="11.900" r="3.500" fill="#ee8a26"/><circle cx="10.700" cy="11.900" r="2.800" fill="#cc1a0c"/><circle cx="10.100" cy="11.200" r="1.100" fill="#e5452e"/></g></svg>
<svg class=ic style="left:5px;top:752px" width=22 height=22><g><ellipse cx="11" cy="20" rx="6" ry=".7" fill="#ebebeb"/><g fill="#f6860e" stroke="#f6860e"><circle cx="3.4" cy="5.2" r="2" stroke="none"/><circle cx="8.3" cy="2.9" r="2.1" stroke="none"/><circle cx="13.8" cy="2.9" r="2.1" stroke="none"/><circle cx="18.6" cy="5.2" r="2" stroke="none"/><path d="M3.4 5.2L7 9.5M8.3 2.9L9.400 7.500M13.800 2.900L12.700 7.500M18.600 5.200L15 9.500" stroke-width="4" stroke-linecap="round"/><path d="M1 11.500C3 8.500 6.500 5.500 11 5.500C15.500 5.500 19 8.500 21 11.500C18.500 15.500 15.500 19.300 11 19.300C6.500 19.300 3.500 15.500 1 11.500z" stroke="none"/></g><path d="M2.500 12.500C5 16.500 8 18.600 11 18.600C14 18.600 17 16.500 19.500 12.500C17 17 14 19.300 11 19.300C8 19.300 5 17 2.500 12.500z" fill="#e66c08"/><circle cx="11" cy="12" r="5.500" fill="none" stroke="#fbd9b0" stroke-width=".6"/><circle cx="11" cy="12" r="4.600" fill="#fff"/><circle cx="10.800" cy="11.900" r="3.500" fill="#ee8a26"/><circle cx="10.700" cy="11.900" r="2.800" fill="#cc1a0c"/><circle cx="10.100" cy="11.200" r="1.100" fill="#e5452e"/></g></svg>
<svg class=ic style="left:5px;top:776px" width=22 height=22><g><ellipse cx="11" cy="20" rx="6" ry=".7" fill="#ebebeb"/><g fill="#f6860e" stroke="#f6860e"><circle cx="3.4" cy="5.2" r="2" stroke="none"/><circle cx="8.3" cy="2.9" r="2.1" stroke="none"/><circle cx="13.8" cy="2.9" r="2.1" stroke="none"/><circle cx="18.6" cy="5.2" r="2" stroke="none"/><path d="M3.4 5.2L7 9.5M8.3 2.9L9.400 7.500M13.800 2.900L12.700 7.500M18.600 5.200L15 9.500" stroke-width="4" stroke-linecap="round"/><path d="M1 11.500C3 8.500 6.500 5.500 11 5.500C15.500 5.500 19 8.500 21 11.500C18.500 15.500 15.500 19.300 11 19.300C6.500 19.300 3.500 15.500 1 11.500z" stroke="none"/></g><path d="M2.500 12.500C5 16.500 8 18.600 11 18.600C14 18.600 17 16.500 19.500 12.500C17 17 14 19.300 11 19.300C8 19.300 5 17 2.500 12.500z" fill="#e66c08"/><circle cx="11" cy="12" r="5.500" fill="none" stroke="#fbd9b0" stroke-width=".6"/><circle cx="11" cy="12" r="4.600" fill="#fff"/><circle cx="10.800" cy="11.900" r="3.500" fill="#ee8a26"/><circle cx="10.700" cy="11.900" r="2.800" fill="#cc1a0c"/><circle cx="10.100" cy="11.200" r="1.100" fill="#e5452e"/></g></svg>
<svg class=ic style="left:5px;top:800px" width=22 height=22><g><path d="M18 4L19.700 4.500V17L17.800 19.200z" fill="#a58044"/><path d="M18 4.300L17.900 16.600L14.500 19.600L13 18.200z" fill="#e6eaee"/><path d="M17.100 8L16.900 17.300M16 11L15.800 18.300" stroke="#cfd5da" stroke-width=".6"/><path d="M17.900 16.600L14.500 19.600" stroke="#c4c8cc" stroke-width=".6"/><defs><linearGradient id="npg12" x1=".6" y1="0" x2=".3" y2="1"><stop offset="0" stop-color="#cdeef6"/><stop offset=".5" stop-color="#7fc8dc"/><stop offset="1" stop-color="#3aa0be"/></linearGradient></defs><path d="M7.500 2.300L18 4.300L13 18.200L1 14.700z" fill="url(#npg12)"/><path d="M7.500 2.300L18.600 4.100" stroke="#6f8080" stroke-width=".9"/></g></svg>
<svg class=ic style="left:5px;top:824px" width=22 height=22><g><path d="M18 4L19.700 4.500V17L17.800 19.200z" fill="#a58044"/><path d="M18 4.300L17.900 16.600L14.500 19.600L13 18.200z" fill="#e6eaee"/><path d="M17.100 8L16.900 17.300M16 11L15.800 18.300" stroke="#cfd5da" stroke-width=".6"/><path d="M17.900 16.600L14.500 19.600" stroke="#c4c8cc" stroke-width=".6"/><defs><linearGradient id="npg13" x1=".6" y1="0" x2=".3" y2="1"><stop offset="0" stop-color="#cdeef6"/><stop offset=".5" stop-color="#7fc8dc"/><stop offset="1" stop-color="#3aa0be"/></linearGradient></defs><path d="M7.500 2.300L18 4.300L13 18.200L1 14.700z" fill="url(#npg13)"/><path d="M7.500 2.300L18.600 4.100" stroke="#6f8080" stroke-width=".9"/></g></svg>
<svg class=ic style="left:5px;top:848px" width=22 height=22><g><path d="M18 4L19.700 4.500V17L17.800 19.200z" fill="#a58044"/><path d="M18 4.300L17.900 16.600L14.500 19.600L13 18.200z" fill="#e6eaee"/><path d="M17.100 8L16.900 17.300M16 11L15.800 18.300" stroke="#cfd5da" stroke-width=".6"/><path d="M17.900 16.600L14.500 19.600" stroke="#c4c8cc" stroke-width=".6"/><defs><linearGradient id="npg14" x1=".6" y1="0" x2=".3" y2="1"><stop offset="0" stop-color="#cdeef6"/><stop offset=".5" stop-color="#7fc8dc"/><stop offset="1" stop-color="#3aa0be"/></linearGradient></defs><path d="M7.500 2.300L18 4.300L13 18.200L1 14.700z" fill="url(#npg14)"/><path d="M7.500 2.300L18.600 4.100" stroke="#6f8080" stroke-width=".9"/></g></svg>
<svg class=ic style="left:5px;top:872px" width=22 height=22><g><ellipse cx="11" cy="20" rx="6" ry=".7" fill="#ebebeb"/><g fill="#f6860e" stroke="#f6860e"><circle cx="3.4" cy="5.2" r="2" stroke="none"/><circle cx="8.3" cy="2.9" r="2.1" stroke="none"/><circle cx="13.8" cy="2.9" r="2.1" stroke="none"/><circle cx="18.6" cy="5.2" r="2" stroke="none"/><path d="M3.4 5.2L7 9.5M8.3 2.9L9.400 7.500M13.800 2.900L12.700 7.500M18.600 5.200L15 9.500" stroke-width="4" stroke-linecap="round"/><path d="M1 11.500C3 8.500 6.500 5.500 11 5.500C15.500 5.500 19 8.500 21 11.500C18.500 15.500 15.500 19.300 11 19.300C6.500 19.300 3.500 15.500 1 11.500z" stroke="none"/></g><path d="M2.500 12.500C5 16.500 8 18.600 11 18.600C14 18.600 17 16.500 19.500 12.500C17 17 14 19.300 11 19.300C8 19.300 5 17 2.500 12.500z" fill="#e66c08"/><circle cx="11" cy="12" r="5.500" fill="none" stroke="#fbd9b0" stroke-width=".6"/><circle cx="11" cy="12" r="4.600" fill="#fff"/><circle cx="10.800" cy="11.900" r="3.500" fill="#ee8a26"/><circle cx="10.700" cy="11.900" r="2.800" fill="#cc1a0c"/><circle cx="10.100" cy="11.200" r="1.100" fill="#e5452e"/></g></svg>
<svg class=ic style="left:5px;top:896px" width=22 height=22><g><ellipse cx="11" cy="20" rx="6" ry=".7" fill="#ebebeb"/><g fill="#f6860e" stroke="#f6860e"><circle cx="3.4" cy="5.2" r="2" stroke="none"/><circle cx="8.3" cy="2.9" r="2.1" stroke="none"/><circle cx="13.8" cy="2.9" r="2.1" stroke="none"/><circle cx="18.6" cy="5.2" r="2" stroke="none"/><path d="M3.4 5.2L7 9.5M8.3 2.9L9.400 7.500M13.800 2.900L12.700 7.500M18.600 5.200L15 9.500" stroke-width="4" stroke-linecap="round"/><path d="M1 11.500C3 8.500 6.500 5.500 11 5.500C15.500 5.500 19 8.500 21 11.500C18.500 15.500 15.500 19.300 11 19.300C6.500 19.300 3.500 15.500 1 11.500z" stroke="none"/></g><path d="M2.500 12.500C5 16.500 8 18.600 11 18.600C14 18.600 17 16.500 19.500 12.500C17 17 14 19.300 11 19.300C8 19.300 5 17 2.500 12.500z" fill="#e66c08"/><circle cx="11" cy="12" r="5.500" fill="none" stroke="#fbd9b0" stroke-width=".6"/><circle cx="11" cy="12" r="4.600" fill="#fff"/><circle cx="10.800" cy="11.900" r="3.500" fill="#ee8a26"/><circle cx="10.700" cy="11.900" r="2.800" fill="#cc1a0c"/><circle cx="10.100" cy="11.200" r="1.100" fill="#e5452e"/></g></svg>
<svg class=ic style="left:5px;top:920px" width=22 height=22><g><path d="M18 4L19.700 4.500V17L17.800 19.200z" fill="#a58044"/><path d="M18 4.300L17.900 16.600L14.500 19.600L13 18.200z" fill="#e6eaee"/><path d="M17.100 8L16.900 17.300M16 11L15.800 18.300" stroke="#cfd5da" stroke-width=".6"/><path d="M17.900 16.600L14.500 19.600" stroke="#c4c8cc" stroke-width=".6"/><defs><linearGradient id="npg17" x1=".6" y1="0" x2=".3" y2="1"><stop offset="0" stop-color="#cdeef6"/><stop offset=".5" stop-color="#7fc8dc"/><stop offset="1" stop-color="#3aa0be"/></linearGradient></defs><path d="M7.500 2.300L18 4.300L13 18.200L1 14.700z" fill="url(#npg17)"/><path d="M7.500 2.300L18.600 4.100" stroke="#6f8080" stroke-width=".9"/></g></svg>
<svg class=ic style="left:5px;top:944px" width=22 height=22><g><path d="M18 4L19.700 4.500V17L17.800 19.200z" fill="#a58044"/><path d="M18 4.300L17.900 16.600L14.500 19.600L13 18.200z" fill="#e6eaee"/><path d="M17.100 8L16.900 17.300M16 11L15.800 18.300" stroke="#cfd5da" stroke-width=".6"/><path d="M17.900 16.600L14.500 19.600" stroke="#c4c8cc" stroke-width=".6"/><defs><linearGradient id="npg18" x1=".6" y1="0" x2=".3" y2="1"><stop offset="0" stop-color="#cdeef6"/><stop offset=".5" stop-color="#7fc8dc"/><stop offset="1" stop-color="#3aa0be"/></linearGradient></defs><path d="M7.500 2.300L18 4.300L13 18.200L1 14.700z" fill="url(#npg18)"/><path d="M7.500 2.300L18.600 4.100" stroke="#6f8080" stroke-width=".9"/></g></svg>
<svg class=ic style="left:5px;top:968px" width=22 height=22><g><ellipse cx="11" cy="20" rx="6" ry=".7" fill="#ebebeb"/><g fill="#f6860e" stroke="#f6860e"><circle cx="3.4" cy="5.2" r="2" stroke="none"/><circle cx="8.3" cy="2.9" r="2.1" stroke="none"/><circle cx="13.8" cy="2.9" r="2.1" stroke="none"/><circle cx="18.6" cy="5.2" r="2" stroke="none"/><path d="M3.4 5.2L7 9.5M8.3 2.9L9.400 7.500M13.800 2.900L12.700 7.500M18.600 5.200L15 9.500" stroke-width="4" stroke-linecap="round"/><path d="M1 11.500C3 8.500 6.500 5.500 11 5.500C15.500 5.500 19 8.500 21 11.500C18.500 15.500 15.500 19.300 11 19.300C6.500 19.300 3.500 15.500 1 11.500z" stroke="none"/></g><path d="M2.500 12.500C5 16.500 8 18.600 11 18.600C14 18.600 17 16.500 19.500 12.500C17 17 14 19.300 11 19.300C8 19.300 5 17 2.500 12.500z" fill="#e66c08"/><circle cx="11" cy="12" r="5.500" fill="none" stroke="#fbd9b0" stroke-width=".6"/><circle cx="11" cy="12" r="4.600" fill="#fff"/><circle cx="10.800" cy="11.900" r="3.500" fill="#ee8a26"/><circle cx="10.700" cy="11.900" r="2.800" fill="#cc1a0c"/><circle cx="10.100" cy="11.200" r="1.100" fill="#e5452e"/></g></svg>
<svg class=ic style="left:5px;top:992px" width=22 height=22><g><path d="M18 4L19.700 4.500V17L17.800 19.200z" fill="#a58044"/><path d="M18 4.300L17.900 16.600L14.500 19.600L13 18.200z" fill="#e6eaee"/><path d="M17.100 8L16.900 17.300M16 11L15.800 18.300" stroke="#cfd5da" stroke-width=".6"/><path d="M17.900 16.600L14.500 19.600" stroke="#c4c8cc" stroke-width=".6"/><defs><linearGradient id="npg20" x1=".6" y1="0" x2=".3" y2="1"><stop offset="0" stop-color="#cdeef6"/><stop offset=".5" stop-color="#7fc8dc"/><stop offset="1" stop-color="#3aa0be"/></linearGradient></defs><path d="M7.500 2.300L18 4.300L13 18.200L1 14.700z" fill="url(#npg20)"/><path d="M7.500 2.300L18.600 4.100" stroke="#6f8080" stroke-width=".9"/></g></svg>
<svg class=ic style="left:728px;top:958px" width="44" height="36" viewBox="0 0 44 36">
<g fill="#b5b5b5">
<ellipse cx="15.8" cy="14.1" rx="13.2" ry="11.1"/>
<path d="M7.5 21L5.5 27.300L12.500 24z"/>
<ellipse cx="27.700" cy="23" rx="11.600" ry="10.800" fill="#fff"/>
<ellipse cx="27.700" cy="23" rx="10.500" ry="9.700"/>
<path d="M34 30.500L38.500 33.600L37 28.500z"/>
</g>
<circle cx="11.700" cy="10.900" r="1.700" fill="#fff"/><circle cx="20.800" cy="10.900" r="1.700" fill="#fff"/>
<circle cx="24.800" cy="20.300" r="1.400" fill="#fff"/><circle cx="32" cy="20.300" r="1.400" fill="#fff"/>
</svg>
<div class=t style="left:779.5px;top:961px;font-size:26px;line-height:32px;height:32px;color:#b2b2b2;-webkit-text-stroke:0.5px #b2b2b2">公众号</div>
<div class=t style="left:870.5px;top:961px;font-size:26px;line-height:32px;height:32px;color:#b2b2b2;-webkit-text-stroke:0.5px #b2b2b2">·</div>
<div class=t style="left:893px;top:960.7px;font-size:29px;line-height:32px;height:32px;letter-spacing:-1.1px;color:#b2b2b2;-webkit-text-stroke:0.5px #b2b2b2">ADLab</div>

<!-- texts -->
<div class=t style="left:35.4px;top:9.6px;letter-spacing:0.51px;">49b4e8d76132e296a29cd52b3340d6df.apk</div>
<div class=t style="left:7.6px;top:40.0px;letter-spacing:0.10px;"><u>F</u>ile</div>
<div class=t style="left:46.8px;top:40.0px;letter-spacing:0.38px;"><u>C</u>ommands</div>
<div class=t style="left:143.2px;top:40.0px;letter-spacing:0.88px;">Tool<u>s</u></div>
<div class=t style="left:197.1px;top:40.0px;letter-spacing:0.22px;">Fav<u>o</u>rites</div>
<div class=t style="left:276.8px;top:40.0px;letter-spacing:0.77px;">Optio<u>n</u>s</div>
<div class=t style="left:348.8px;top:40.0px;letter-spacing:0.91px;"><u>H</u>elp</div>
<div class=t style="left:8.5px;top:179.6px;letter-spacing:0.45px;">Name</div>
<div class=t style="left:523.7px;top:179.6px;letter-spacing:-0.20px;">Size</div>
<div class=t style="left:588.2px;top:179.6px;letter-spacing:0.13px;">Packed</div>
<div class=t style="left:652.1px;top:179.6px;letter-spacing:0.79px;">Type</div>
<div class=t style="left:755.7px;top:179.6px;letter-spacing:1.31px;">Modified</div>
<div class=t style="left:898.4px;top:179.6px;letter-spacing:-0.70px;">CRC32</div>
<div class=t style="left:30.0px;top:115.0px;letter-spacing:1.28px;">Add</div>
<div class=t style="left:84.4px;top:115.0px;letter-spacing:0.40px;">Extract To</div>
<div class=t style="left:181.6px;top:115.0px;letter-spacing:0.35px;">Test</div>
<div class=t style="left:246.2px;top:115.0px;letter-spacing:-0.01px;">View</div>
<div class=t style="left:306.2px;top:115.0px;letter-spacing:0.61px;">Delete</div>
<div class=t style="left:380.5px;top:115.0px;letter-spacing:0.30px;">Find</div>
<div class=t style="left:439.8px;top:115.0px;letter-spacing:0.21px;">Wizard</div>
<div class=t style="left:516.3px;top:115.0px;letter-spacing:0.87px;">Info</div>
<div class=t style="left:579.0px;top:115.0px;letter-spacing:-0.09px;">VirusScan</div>
<div class=t style="left:658.6px;top:115.0px;letter-spacing:0.77px;">Comment</div>
<div class=t style="left:755.5px;top:115.0px;letter-spacing:-1.07px;">SFX</div>
<div class=t style="left:28.5px;top:204.6px;letter-spacing:0.49px;">..</div>
<div class=t style="left:652.0px;top:204.6px;letter-spacing:0.39px;"><span class=c>文件夹</span></div>
<div class=t style="left:29.2px;top:228.6px;letter-spacing:0.75px;">\AndroidManifest.xml</div>
<div class=t style="left:482.8px;top:228.6px;letter-spacing:0.11px;">1,376,026</div>
<div class=t style="left:569.3px;top:228.6px;letter-spacing:0.11px;">1,322,407</div>
<div class=t style="left:652.0px;top:228.6px;letter-spacing:0.39px;"><span class=c>文件夹</span></div>
<div class=t style="left:29.2px;top:252.6px;letter-spacing:0.19px;">\classes.dex</div>
<div class=t style="left:482.8px;top:252.6px;letter-spacing:0.11px;">1,444,972</div>
<div class=t style="left:569.3px;top:252.6px;letter-spacing:0.11px;">1,384,107</div>
<div class=t style="left:652.0px;top:252.6px;letter-spacing:0.39px;"><span class=c>文件夹</span></div>
<div class=t style="left:29.2px;top:276.6px;letter-spacing:0.27px;">\resources.arsc</div>
<div class=t style="left:495.5px;top:276.6px;letter-spacing:0.19px;">499,557</div>
<div class=t style="left:581.9px;top:276.6px;letter-spacing:0.19px;">420,716</div>
<div class=t style="left:652.0px;top:276.6px;letter-spacing:0.39px;"><span class=c>文件夹</span></div>
<div class=t style="left:29.3px;top:300.6px;letter-spacing:0.12px;">70i6We38mXGe6QTZuEfx</div>
<div class=t style="left:526.0px;top:300.6px;letter-spacing:0.32px;">252</div>
<div class=t style="left:613.3px;top:300.6px;letter-spacing:0.06px;">167</div>
<div class=t style="left:652.0px;top:300.6px;letter-spacing:0.39px;"><span class=c>文件夹</span></div>
<div class=t style="left:29.8px;top:324.6px;letter-spacing:0.67px;">AndroidManifest.xml</div>
<div class=t style="left:482.8px;top:324.6px;letter-spacing:0.11px;">1,376,026</div>
<div class=t style="left:569.3px;top:324.6px;letter-spacing:0.11px;">1,322,407</div>
<div class=t style="left:652.0px;top:324.6px;letter-spacing:0.39px;"><span class=c>文件夹</span></div>
<div class=t style="left:29.0px;top:348.6px;letter-spacing:-0.20px;">assets</div>
<div class=t style="left:481.9px;top:348.6px;letter-spacing:0.21px;">9,191,993</div>
<div class=t style="left:568.4px;top:348.6px;letter-spacing:0.21px;">5,676,908</div>
<div class=t style="left:652.0px;top:348.6px;letter-spacing:0.39px;"><span class=c>文件夹</span></div>
<div class=t style="left:29.0px;top:372.6px;letter-spacing:0.06px;">classes.dex</div>
<div class=t style="left:482.8px;top:372.6px;letter-spacing:0.11px;">1,444,972</div>
<div class=t style="left:569.3px;top:372.6px;letter-spacing:0.11px;">1,384,107</div>
<div class=t style="left:652.0px;top:372.6px;letter-spacing:0.39px;"><span class=c>文件夹</span></div>
<div class=t style="left:29.0px;top:396.6px;letter-spacing:0.09px;">classes2.dex</div>
<div class=t style="left:495.5px;top:396.6px;letter-spacing:0.19px;">355,152</div>
<div class=t style="left:581.9px;top:396.6px;letter-spacing:0.19px;">339,526</div>
<div class=t style="left:652.0px;top:396.6px;letter-spacing:0.39px;"><span class=c>文件夹</span></div>
<div class=t style="left:29.0px;top:420.6px;letter-spacing:0.09px;">classes3.dex</div>
<div class=t style="left:495.5px;top:420.6px;letter-spacing:0.19px;">689,756</div>
<div class=t style="left:581.9px;top:420.6px;letter-spacing:0.19px;">673,180</div>
<div class=t style="left:652.0px;top:420.6px;letter-spacing:0.39px;"><span class=c>文件夹</span></div>
<div class=t style="left:29.0px;top:444.6px;letter-spacing:0.09px;">classes4.dex</div>
<div class=t style="left:495.5px;top:444.6px;letter-spacing:0.47px;">403,119</div>
<div class=t style="left:581.9px;top:444.6px;letter-spacing:0.19px;">382,187</div>
<div class=t style="left:652.0px;top:444.6px;letter-spacing:0.39px;"><span class=c>文件夹</span></div>
<div class=t style="left:29.0px;top:468.6px;letter-spacing:0.09px;">classes5.dex</div>
<div class=t style="left:495.5px;top:468.6px;letter-spacing:0.19px;">404,568</div>
<div class=t style="left:581.9px;top:468.6px;letter-spacing:0.19px;">385,818</div>
<div class=t style="left:652.0px;top:468.6px;letter-spacing:0.39px;"><span class=c>文件夹</span></div>
<div class=t style="left:29.0px;top:492.6px;letter-spacing:0.09px;">classes6.dex</div>
<div class=t style="left:495.5px;top:492.6px;letter-spacing:0.19px;">301,576</div>
<div class=t style="left:581.9px;top:492.6px;letter-spacing:0.19px;">283,435</div>
<div class=t style="left:652.0px;top:492.6px;letter-spacing:0.39px;"><span class=c>文件夹</span></div>
<div class=t style="left:35.4px;top:513.6px;letter-spacing:1.17px;">.png</div>
<div class=t style="left:512.4px;top:513.6px;letter-spacing:0.31px;">1,957</div>
<div class=t style="left:599.9px;top:513.6px;letter-spacing:0.14px;">1,957</div>
<div class=t style="left:651.4px;top:513.6px;letter-spacing:-0.46px;">PNG <span class=c>文件</span></div>
<div class=t style="left:755.3px;top:513.6px;letter-spacing:0.39px;">1981/1/1 1:01</div>
<div class=t style="left:898.6px;top:513.6px;letter-spacing:-0.12px;">4A06B5BD</div>
<div class=t style="left:35.4px;top:537.6px;letter-spacing:0.86px;">.xml</div>
<div class=t style="left:512.4px;top:537.6px;letter-spacing:0.31px;">2,396</div>
<div class=t style="left:612.5px;top:537.6px;letter-spacing:0.32px;">915</div>
<div class=t style="left:651.4px;top:537.6px;letter-spacing:0.24px;">XML <span class=c>文件</span></div>
<div class=t style="left:755.3px;top:537.6px;letter-spacing:0.39px;">1981/1/1 1:01</div>
<div class=t style="left:897.8px;top:537.6px;letter-spacing:-0.21px;">33D3CB40</div>
<div class=t style="left:31.4px;top:561.6px;letter-spacing:0.55px;">.9.png</div>
<div class=t style="left:525.9px;top:561.6px;letter-spacing:-0.03px;">200</div>
<div class=t style="left:612.5px;top:561.6px;letter-spacing:0.32px;">200</div>
<div class=t style="left:651.4px;top:561.6px;letter-spacing:-0.46px;">PNG <span class=c>文件</span></div>
<div class=t style="left:755.3px;top:561.6px;letter-spacing:0.39px;">1981/1/1 1:01</div>
<div class=t style="left:897.8px;top:561.6px;letter-spacing:-0.00px;">3023E3DA</div>
<div class=t style="left:31.0px;top:585.6px;letter-spacing:1.22px;">.png</div>
<div class=t style="left:512.4px;top:585.6px;letter-spacing:0.31px;">3,781</div>
<div class=t style="left:599.0px;top:585.6px;letter-spacing:0.31px;">3,781</div>
<div class=t style="left:651.4px;top:585.6px;letter-spacing:-0.46px;">PNG <span class=c>文件</span></div>
<div class=t style="left:755.3px;top:585.6px;letter-spacing:0.39px;">1981/1/1 1:01</div>
<div class=t style="left:898.6px;top:585.6px;letter-spacing:-0.70px;">47C4EC35</div>
<div class=t style="left:31.0px;top:609.6px;letter-spacing:0.76px;">.xml</div>
<div class=t style="left:512.4px;top:609.6px;letter-spacing:0.31px;">1,692</div>
<div class=t style="left:612.5px;top:609.6px;letter-spacing:0.32px;">650</div>
<div class=t style="left:651.4px;top:609.6px;letter-spacing:0.24px;">XML <span class=c>文件</span></div>
<div class=t style="left:755.3px;top:609.6px;letter-spacing:0.39px;">1981/1/1 1:01</div>
<div class=t style="left:897.8px;top:609.6px;letter-spacing:-0.07px;">0341E0A9</div>
<div class=t style="left:27.5px;top:633.6px;letter-spacing:0.78px;">..png</div>
<div class=t style="left:512.4px;top:633.6px;letter-spacing:0.13px;">8,350</div>
<div class=t style="left:599.0px;top:633.6px;letter-spacing:0.31px;">8,350</div>
<div class=t style="left:651.4px;top:633.6px;letter-spacing:-0.46px;">PNG <span class=c>文件</span></div>
<div class=t style="left:755.3px;top:633.6px;letter-spacing:0.39px;">1981/1/1 1:01</div>
<div class=t style="left:897.8px;top:633.6px;letter-spacing:-0.09px;">5BC9A7D5</div>
<div class=t style="left:27.5px;top:657.6px;letter-spacing:0.43px;">..xml</div>
<div class=t style="left:512.4px;top:657.6px;letter-spacing:0.13px;">2,724</div>
<div class=t style="left:612.5px;top:657.6px;letter-spacing:0.32px;">951</div>
<div class=t style="left:651.4px;top:657.6px;letter-spacing:0.24px;">XML <span class=c>文件</span></div>
<div class=t style="left:755.3px;top:657.6px;letter-spacing:0.39px;">1981/1/1 1:01</div>
<div class=t style="left:897.8px;top:657.6px;letter-spacing:-0.27px;">B54E662A</div>
<div class=t style="left:27.5px;top:681.6px;letter-spacing:1.17px;">.png</div>
<div class=t style="left:512.4px;top:681.6px;letter-spacing:0.31px;">1,273</div>
<div class=t style="left:599.9px;top:681.6px;letter-spacing:0.14px;">1,273</div>
<div class=t style="left:651.4px;top:681.6px;letter-spacing:-0.46px;">PNG <span class=c>文件</span></div>
<div class=t style="left:755.3px;top:681.6px;letter-spacing:0.39px;">1981/1/1 1:01</div>
<div class=t style="left:898.6px;top:681.6px;letter-spacing:0.07px;">A8FA7131</div>
<div class=t style="left:28.2px;top:705.6px;letter-spacing:0.51px;"><span style="letter-spacing:1.9px">\\</span>.9.png</div>
<div class=t style="left:525.9px;top:705.6px;letter-spacing:-0.03px;">345</div>
<div class=t style="left:612.5px;top:705.6px;letter-spacing:0.32px;">345</div>
<div class=t style="left:651.4px;top:705.6px;letter-spacing:-0.46px;">PNG <span class=c>文件</span></div>
<div class=t style="left:755.3px;top:705.6px;letter-spacing:0.39px;">1981/1/1 1:01</div>
<div class=t style="left:897.8px;top:705.6px;letter-spacing:-0.91px;">8DECE53E</div>
<div class=t style="left:28.2px;top:729.6px;letter-spacing:0.74px;"><span style="letter-spacing:1.9px">\\</span>.png</div>
<div class=t style="left:525.9px;top:729.6px;letter-spacing:0.32px;">449</div>
<div class=t style="left:612.5px;top:729.6px;letter-spacing:0.32px;">449</div>
<div class=t style="left:651.4px;top:729.6px;letter-spacing:-0.46px;">PNG <span class=c>文件</span></div>
<div class=t style="left:755.3px;top:729.6px;letter-spacing:0.39px;">1981/1/1 1:01</div>
<div class=t style="left:897.8px;top:729.6px;letter-spacing:0.05px;">6F980C06</div>
<div class=t style="left:28.2px;top:753.6px;letter-spacing:0.74px;"><span style="letter-spacing:1.9px">\\</span>.png</div>
<div class=t style="left:525.9px;top:753.6px;letter-spacing:0.32px;">227</div>
<div class=t style="left:612.5px;top:753.6px;letter-spacing:0.32px;">227</div>
<div class=t style="left:651.4px;top:753.6px;letter-spacing:-0.46px;">PNG <span class=c>文件</span></div>
<div class=t style="left:755.3px;top:753.6px;letter-spacing:0.39px;">1981/1/1 1:01</div>
<div class=t style="left:897.8px;top:753.6px;letter-spacing:-0.57px;">C858BED6</div>
<div class=t style="left:28.2px;top:777.6px;letter-spacing:0.74px;"><span style="letter-spacing:1.9px">\\</span>.png</div>
<div class=t style="left:525.9px;top:777.6px;letter-spacing:-0.03px;">490</div>
<div class=t style="left:612.5px;top:777.6px;letter-spacing:0.32px;">490</div>
<div class=t style="left:651.4px;top:777.6px;letter-spacing:-0.46px;">PNG <span class=c>文件</span></div>
<div class=t style="left:755.3px;top:777.6px;letter-spacing:0.39px;">1981/1/1 1:01</div>
<div class=t style="left:898.6px;top:777.6px;letter-spacing:-0.38px;">4CE92B29</div>
<div class=t style="left:28.2px;top:801.6px;letter-spacing:0.44px;"><span style="letter-spacing:1.9px">\\</span>.xml</div>
<div class=t style="left:512.4px;top:801.6px;letter-spacing:0.13px;">2,484</div>
<div class=t style="left:612.5px;top:801.6px;letter-spacing:0.32px;">905</div>
<div class=t style="left:651.4px;top:801.6px;letter-spacing:0.24px;">XML <span class=c>文件</span></div>
<div class=t style="left:755.3px;top:801.6px;letter-spacing:0.39px;">1981/1/1 1:01</div>
<div class=t style="left:897.8px;top:801.6px;letter-spacing:-0.61px;">DFDAEAB5</div>
<div class=t style="left:28.2px;top:825.6px;letter-spacing:0.44px;"><span style="letter-spacing:1.9px">\\</span>.xml</div>
<div class=t style="left:512.4px;top:825.6px;letter-spacing:0.13px;">4,684</div>
<div class=t style="left:599.9px;top:825.6px;letter-spacing:0.14px;">1,447</div>
<div class=t style="left:651.4px;top:825.6px;letter-spacing:0.24px;">XML <span class=c>文件</span></div>
<div class=t style="left:755.3px;top:825.6px;letter-spacing:0.39px;">1981/1/1 1:01</div>
<div class=t style="left:897.8px;top:825.6px;letter-spacing:-0.14px;">EA7326AE</div>
<div class=t style="left:28.2px;top:849.6px;letter-spacing:0.44px;"><span style="letter-spacing:1.9px">\\</span>.xml</div>
<div class=t style="left:512.4px;top:849.6px;letter-spacing:0.31px;">2,016</div>
<div class=t style="left:612.5px;top:849.6px;letter-spacing:0.32px;">805</div>
<div class=t style="left:651.4px;top:849.6px;letter-spacing:0.24px;">XML <span class=c>文件</span></div>
<div class=t style="left:755.3px;top:849.6px;letter-spacing:0.39px;">1981/1/1 1:01</div>
<div class=t style="left:897.8px;top:849.6px;letter-spacing:-0.26px;">18DB5C67</div>
<div class=t style="left:28.2px;top:873.6px;letter-spacing:0.65px;"><span style="letter-spacing:1.9px">\\\</span>.png</div>
<div class=t style="left:512.4px;top:873.6px;letter-spacing:0.31px;">1,766</div>
<div class=t style="left:599.9px;top:873.6px;letter-spacing:0.14px;">1,766</div>
<div class=t style="left:651.4px;top:873.6px;letter-spacing:-0.46px;">PNG <span class=c>文件</span></div>
<div class=t style="left:755.3px;top:873.6px;letter-spacing:0.39px;">1981/1/1 1:01</div>
<div class=t style="left:897.8px;top:873.6px;letter-spacing:0.17px;">D5F35702</div>
<div class=t style="left:28.2px;top:897.6px;letter-spacing:0.65px;"><span style="letter-spacing:1.9px">\\\</span>.png</div>
<div class=t style="left:503.1px;top:897.6px;letter-spacing:0.38px;">52,876</div>
<div class=t style="left:589.7px;top:897.6px;letter-spacing:0.38px;">52,876</div>
<div class=t style="left:651.4px;top:897.6px;letter-spacing:-0.46px;">PNG <span class=c>文件</span></div>
<div class=t style="left:755.3px;top:897.6px;letter-spacing:0.39px;">1981/1/1 1:01</div>
<div class=t style="left:897.8px;top:897.6px;letter-spacing:0.08px;">D5CD2528</div>
<div class=t style="left:28.2px;top:921.6px;letter-spacing:0.32px;"><span style="letter-spacing:1.9px">\\\</span>.xml</div>
<div class=t style="left:512.4px;top:921.6px;letter-spacing:0.31px;">4,516</div>
<div class=t style="left:599.9px;top:921.6px;letter-spacing:0.14px;">1,437</div>
<div class=t style="left:651.4px;top:921.6px;letter-spacing:0.24px;">XML <span class=c>文件</span></div>
<div class=t style="left:755.3px;top:921.6px;letter-spacing:0.39px;">1981/1/1 1:01</div>
<div class=t style="left:897.8px;top:921.6px;letter-spacing:-0.36px;">D848E2C5</div>
<div class=t style="left:28.2px;top:945.6px;letter-spacing:0.32px;"><span style="letter-spacing:1.9px">\\\</span>.xml</div>
<div class=t style="left:525.9px;top:945.6px;letter-spacing:0.32px;">876</div>
<div class=t style="left:612.5px;top:945.6px;letter-spacing:0.32px;">441</div>
<div class=t style="left:651.4px;top:945.6px;letter-spacing:0.24px;">XML <span class=c>文件</span></div>
<div class=t style="left:755.3px;top:945.6px;letter-spacing:0.39px;">1981/1/1 1:01</div>
<div class=t style="left:897.8px;top:945.6px;letter-spacing:-0.35px;">0EB6C70D</div>
<div class=t style="left:28.2px;top:969.6px;letter-spacing:0.67px;"><span style="letter-spacing:1.9px">\\\\</span>.png</div>
<div class=t style="left:512.4px;top:969.6px;letter-spacing:0.31px;">1,822</div>
<div class=t style="left:599.9px;top:969.6px;letter-spacing:0.14px;">1,822</div>
<div class=t style="left:651.4px;top:969.6px;letter-spacing:-0.46px;">PNG <span class=c>文件</span></div>
<div class=t style="left:755.3px;top:969.6px;letter-spacing:0.39px;">1981/1/1 1:01</div>
<div class=t style="left:897.8px;top:969.6px;letter-spacing:0.38px;">035A0A32</div>
<div class=t style="left:28.2px;top:993.6px;letter-spacing:0.35px;"><span style="letter-spacing:1.9px">\\\\</span>.xml</div>
<div class=t style="left:512.4px;top:993.6px;letter-spacing:0.31px;">2,592</div>
<div class=t style="left:612.5px;top:993.6px;letter-spacing:0.32px;">951</div>
<div class=t style="left:651.4px;top:993.6px;letter-spacing:0.24px;">XML <span class=c>文件</span></div>
<div class=t style="left:755.3px;top:993.6px;letter-spacing:0.39px;">1981/1/1 1:01</div>
<div class=t style="left:897.8px;top:993.6px;letter-spacing:0.24px;">3670200F</div>
<!-- annotation boxes -->
<div class=a style="left:6px;top:226px;width:192px;height:46px;border:3px solid #0000ff;box-sizing:content-box"></div>
<div class=a style="left:6px;top:322px;width:188px;height:21px;border:3px solid #ff0000;box-sizing:content-box"></div>
<div class=a style="left:6px;top:368px;width:135px;height:23px;border:3px solid #ff0000;box-sizing:content-box"></div>
</body>
</html>
